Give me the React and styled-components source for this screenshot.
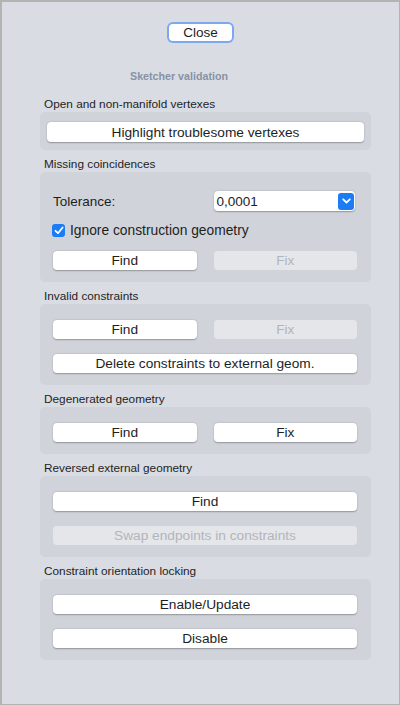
import React from 'react'
import styled, { createGlobalStyle } from 'styled-components'

const GlobalStyle = createGlobalStyle`
    html, body {
        margin: 0;
        padding: 0;
        background: #d9dde3;
    }
    * {
        box-sizing: border-box;
    }
`

const Frame = styled.div`
    width: 400px;
    height: 705px;
    border: 1px solid #b3b3b3;
    border-top-width: 2px;
    border-left-width: 2px;
    background: #d9dde3;
    display: flex;
    flex-direction: column;
    align-items: center;
    padding-top: 22px;
    font-family: 'Liberation Sans', Arial, sans-serif;
    color: #1e1e1e;
`

const CloseButton = styled.button`
    width: 63px;
    height: 17px;
    border: none;
    border-radius: 4px;
    background: #fff;
    box-shadow: 0 0 0 2px #7ea8ee, 0 1px 1px rgba(0, 0, 0, 0.2);
    font-family: inherit;
    font-size: 13.5px;
    color: #1e1e1e;
    padding: 0;
    line-height: 17px;
`

const Title = styled.div`
    align-self: flex-start;
    margin: 28px 0 0 128px;
    font-size: 10.7px;
    line-height: 14px;
    font-weight: bold;
    color: #8892a5;
`

const Body = styled.div`
    width: 331px;
    align-self: flex-start;
    margin: 13px 0 0 38px;
    display: flex;
    flex-direction: column;
`

const Label = styled.div`
    height: 16px;
    line-height: 16px;
    font-size: 11.8px;
    padding-left: 4px;
    margin-top: ${p => (p.first ? 0 : 6)}px;
`

const Group = styled.div`
    background: #d0d4da;
    border-radius: 5px;
    padding: ${p => p.pad || '16px 14px 12px 13px'};
    display: flex;
    flex-direction: column;
    gap: ${p => p.gap || 15}px;
`

const Button = styled.button`
    height: ${p => p.h || 19}px;
    width: 100%;
    border: none;
    border-radius: 4px;
    padding: 0;
    font-family: inherit;
    font-size: 13.7px;
    background: ${p => (p.disabled ? '#e4e6ea' : '#fff')};
    color: ${p => (p.disabled ? '#b2b5ba' : '#1e1e1e')};
    box-shadow: ${p => (p.disabled ? 'none' : '0 0.5px 1.5px rgba(0, 0, 0, 0.3)')};
`

const Pair = styled.div`
    display: grid;
    grid-template-columns: 1fr 1fr;
    column-gap: 17px;
`

const ToleranceRow = styled.div`
    display: grid;
    grid-template-columns: 1fr 1fr;
    column-gap: 17px;
    align-items: center;
    font-size: 13.5px;
`

const Spin = styled.div`
    height: 20px;
    margin-right: 2px;
    background: #fff;
    border-radius: 4px;
    box-shadow: 0 0.5px 1.5px rgba(0, 0, 0, 0.3);
    display: flex;
    align-items: center;
    justify-content: space-between;
    padding: 0 1px 0 3px;
    font-size: 13.5px;
`

const SpinArrow = styled.div`
    width: 16px;
    height: 17px;
    border-radius: 3px;
    background: #1b7cf6;
    display: flex;
    align-items: center;
    justify-content: center;
`

const CheckRow = styled.label`
    height: 14px;
    margin: 0 0 2px 0;
    display: flex;
    align-items: center;
    gap: 5px;
    font-size: 13.8px;
`

const CheckBox = styled.span`
    width: 13px;
    height: 13px;
    border-radius: 3px;
    background: #1b7cf6;
    display: flex;
    align-items: center;
    justify-content: center;
    margin-left: -1px;
`

export default function App() {
    return (
        <>
            <GlobalStyle />
            <Frame>
                <CloseButton>Close</CloseButton>
                <Title>Sketcher validation</Title>
                <Body>
                    <Label first>Open and non-manifold vertexes</Label>
                    <Group pad="10px 7px 8px 7px">
                        <Button h={20}>Highlight troublesome vertexes</Button>
                    </Group>

                    <Label>Missing coincidences</Label>
                    <Group pad="19px 14px 12px 13px" gap={12}>
                        <ToleranceRow>
                            <span>Tolerance:</span>
                            <Spin>
                                <span>0,0001</span>
                                <SpinArrow>
                                    <svg width="9" height="6" viewBox="0 0 9 6">
                                        <path d="M1.2 1.3 L4.5 4.5 L7.8 1.3" fill="none" stroke="#fff" strokeWidth="1.8" strokeLinecap="round" strokeLinejoin="round" />
                                    </svg>
                                </SpinArrow>
                            </Spin>
                        </ToleranceRow>
                        <CheckRow>
                            <CheckBox>
                                <svg width="10" height="9" viewBox="0 0 10 9">
                                    <path d="M1.5 4.8 L4 7.2 L8.6 1.5" fill="none" stroke="#fff" strokeWidth="1.8" strokeLinecap="round" strokeLinejoin="round" />
                                </svg>
                            </CheckBox>
                            Ignore construction geometry
                        </CheckRow>
                        <Pair>
                            <Button>Find</Button>
                            <Button disabled>Fix</Button>
                        </Pair>
                    </Group>

                    <Label>Invalid constraints</Label>
                    <Group>
                        <Pair>
                            <Button>Find</Button>
                            <Button disabled>Fix</Button>
                        </Pair>
                        <Button>Delete constraints to external geom.</Button>
                    </Group>

                    <Label>Degenerated geometry</Label>
                    <Group>
                        <Pair>
                            <Button>Find</Button>
                            <Button>Fix</Button>
                        </Pair>
                    </Group>

                    <Label>Reversed external geometry</Label>
                    <Group>
                        <Button>Find</Button>
                        <Button disabled>Swap endpoints in constraints</Button>
                    </Group>

                    <Label>Constraint orientation locking</Label>
                    <Group>
                        <Button>Enable/Update</Button>
                        <Button>Disable</Button>
                    </Group>
                </Body>
            </Frame>
        </>
    )
}
